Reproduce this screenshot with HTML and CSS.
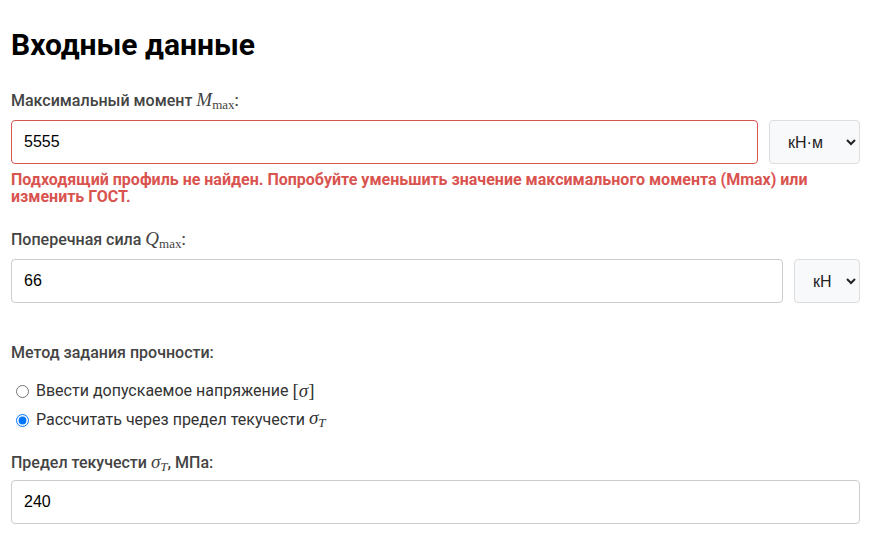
FILE: index.html
```html
<!DOCTYPE html>
<html lang="ru">
<head>
<meta charset="utf-8">
<link rel="stylesheet" href="styles.css">
</head>
<body>
<div class="page">
  <h2 class="title">Входные данные</h2>

  <div class="field">
    <label class="label">Максимальный момент <span class="math"><i>M</i><sub>max</sub></span>:</label>
    <div class="row">
      <input class="input input-error" type="text" value="5555">
      <select class="select select-wide"><option>кН·м</option></select>
    </div>
    <div class="error">Подходящий профиль не найден. Попробуйте уменьшить значение максимального момента (Mmax) или изменить ГОСТ.</div>
  </div>

  <div class="field field-q">
    <label class="label">Поперечная сила <span class="math"><i>Q</i><sub>max</sub></span>:</label>
    <div class="row">
      <input class="input" type="text" value="66">
      <select class="select select-narrow"><option>кН</option></select>
    </div>
  </div>

  <div class="field field-method">
    <div class="label">Метод задания прочности:</div>
    <div class="radios">
      <label class="radio"><input type="radio" name="m"> Ввести допускаемое напряжение <span class="math">[<i>σ</i>]</span></label>
      <label class="radio"><input type="radio" name="m" checked> Рассчитать через предел текучести <span class="math"><i>σ</i><sub><i>T</i></sub></span></label>
    </div>
  </div>

  <div class="field field-yield">
    <label class="label">Предел текучести <span class="math"><i>σ</i><sub><i>T</i></sub></span>, МПа:</label>
    <input class="input full" type="text" value="240">
  </div>
</div>
</body>
</html>
```

FILE: styles.css
```css
* { box-sizing: border-box; }
html, body { margin: 0; padding: 0; background: #fff; }
body { font-family: Roboto, "Liberation Sans", sans-serif; color: #212529; }
.page { padding: 25px 18px 0 11px; }
.title {
  margin: 0 0 25px 0;
  font-size: 30px;
  font-weight: 700;
  line-height: 40px;
  color: #000;
}
.label {
  display: block;
  font-size: 16px;
  font-weight: 500;
  color: #444;
  line-height: 22px;
  margin-bottom: 8px;
}
.field-q { margin-top: 24px; }
.field-method { margin-top: 39px; }
.field-yield { margin-top: 22px; }
.field-yield .label { margin-bottom: 6px; }
.math { font-family: "Liberation Serif", "DejaVu Serif", serif; font-size: 19px; font-weight: 400; line-height: 0; }
.math i { font-style: italic; }
.math sub { font-size: 13px; vertical-align: -3px; line-height: 0; }
.row { display: flex; gap: 11px; }
.input {
  flex: 1;
  height: 44px;
  border: 1px solid #ccc;
  border-radius: 4px;
  padding: 0 12px;
  font-family: "Liberation Sans", Arial, sans-serif;
  font-size: 16px;
  color: #000;
  background: #fff;
  outline: none;
}
.input.full { width: 100%; display: block; }
.input-error { border-color: #d9534f; }
.select {
  height: 44px;
  border: 1px solid #ddd;
  border-radius: 4px;
  background: #f8f9fa;
  font-family: "Liberation Sans", Arial, sans-serif;
  font-size: 16px;
  color: #222;
  padding: 0 8px 0 14px;
}
.select-wide { width: 91px; }
.select-narrow { width: 66px; }
.error {
  margin-top: 7px;
  font-size: 16px;
  font-weight: 700;
  color: #d9534f;
  line-height: 17px;
}
.radios { padding-top: 9px; display: flex; flex-direction: column; gap: 9px; }
.radio {
  display: flex;
  align-items: center;
  font-size: 16px;
  color: #333;
  line-height: 20px;
}
.radio input { margin: 0 7px 0 5px; width: 13px; height: 13px; }
.radio .math { margin-left: 4px; }
```
